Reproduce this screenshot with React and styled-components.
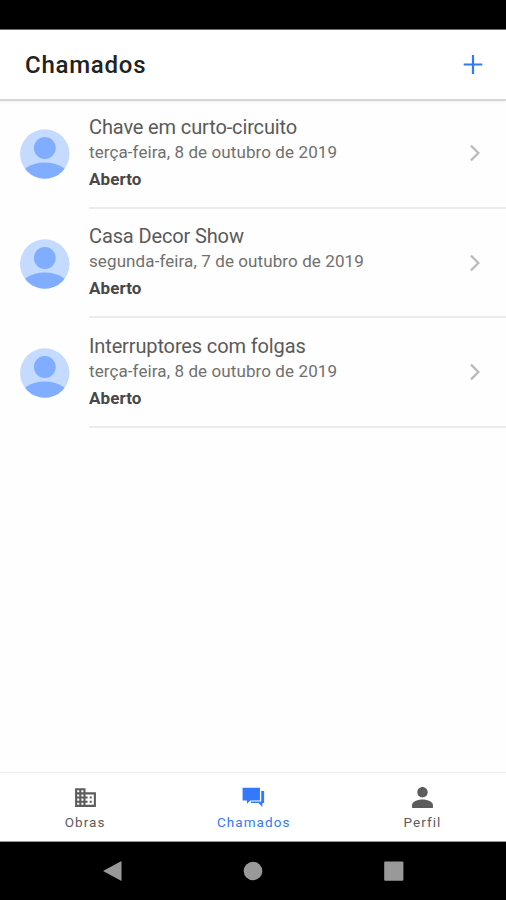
import React from "react";
import styled, { createGlobalStyle } from "styled-components";

const Global = createGlobalStyle`
  * { box-sizing: border-box; }
  body { margin: 0; background: #fff; font-family: Roboto, sans-serif; }
  svg { display: block; flex: none; }
`;

const Screen = styled.div`
  width: 506px;
  height: 900px;
  display: flex;
  flex-direction: column;
  background: #fefefe;
  overflow: hidden;
`;
const StatusBar = styled.div`
  flex: none;
  height: 30px;
  background: #000;
  border-bottom: 1px solid #6c6c6c;
`;
const Header = styled.header`
  flex: none;
  height: 71px;
  display: flex;
  align-items: center;
  justify-content: space-between;
  padding: 0 23px 0 25px;
  background: #fff;
  border-bottom: 2px solid #d6d6d6;
  box-shadow: 0 2px 2px #f5f5f5;
`;
const Title = styled.h1`
  margin: 0;
  font-size: 24px;
  line-height: 30px;
  font-weight: 500;
  letter-spacing: 0.75px;
  color: #222;
`;
const List = styled.main`
  flex: 1;
`;
const Item = styled.article`
  height: 109.55px;
  display: flex;
  padding-left: 20px;
`;
const AvatarBox = styled.div`
  width: 69px;
  flex: none;
  padding-top: 28.4px;
`;
const ItemBody = styled.div`
  flex: 1;
  height: 107.5px;
  display: flex;
  justify-content: space-between;
  border-bottom: 2px solid #ebebeb;
  padding-right: 24px;
`;
const ItemText = styled.div`
  padding-top: 13.5px;
  white-space: nowrap;
`;
const Name = styled.h2`
  margin: 0;
  font-size: 20px;
  line-height: 25px;
  font-weight: 400;
  color: #5a5a5a;
  letter-spacing: -0.13px;
`;
const DateLine = styled.p`
  margin: 0;
  font-size: 17px;
  line-height: 25px;
  color: #707070;
  letter-spacing: 0.1px;
`;
const Status = styled.p`
  margin: 0;
  font-size: 17px;
  line-height: 28px;
  font-weight: 700;
  color: #484848;
  letter-spacing: 0.1px;
`;
const ChevronBox = styled.div`
  padding-top: 42.4px;
`;
const Tabs = styled.nav`
  flex: none;
  height: 70px;
  display: grid;
  grid-template-columns: repeat(3, 1fr);
  background: #fff;
  border-top: 1px solid #f0f0f0;
  border-bottom: 1px solid #999;
`;
const Tab = styled.div`
  display: flex;
  flex-direction: column;
  align-items: center;
  padding: 12px 0 0 1.5px;
  color: ${(p) => (p.$active ? "#3478fb" : "#5c5c5c")};
`;
const TabLabel = styled.span`
  margin-top: 3px;
  font-size: 13.5px;
  line-height: 18px;
  letter-spacing: 1.05px;
`;
const SystemNav = styled.div`
  flex: none;
  height: 58px;
  display: flex;
  justify-content: space-between;
  align-items: center;
  padding: 0 102.5px 0 102px;
  background: #000;
`;

const Avatar = () => (
  <svg width="50" height="50" viewBox="0 0 50 50">
    <defs>
      <clipPath id="disc"><circle cx="24.8" cy="25" r="24.7" /></clipPath>
    </defs>
    <g clipPath="url(#disc)">
      <rect width="50" height="50" fill="#c5daff" />
      <circle cx="24.8" cy="19" r="10.9" fill="#80adff" />
      <ellipse cx="24.8" cy="50" rx="25" ry="16.5" fill="#80adff" />
    </g>
  </svg>
);
const Chevron = () => (
  <svg width="14" height="20" viewBox="0 0 14 20">
    <path d="M3 2.600 L10.400 10 L3 17.400" fill="none" stroke="#b9b9b9" strokeWidth="2.2" />
  </svg>
);
const icons = {
  obras: "M12 7V3H2v18h20V7H12zM6 19H4v-2h2v2zm0-4H4v-2h2v2zm0-4H4V9h2v2zm0-4H4V5h2v2zm4 12H8v-2h2v2zm0-4H8v-2h2v2zm0-4H8V9h2v2zm0-4H8V5h2v2zm10 12h-8v-2h2v-2h-2v-2h2v-2h-2V9h8v10zm-2-8h-2v2h2v-2zm0 4h-2v2h2v-2z",
  chamados: "M1.500 2.600H18.200V14.800H9L5.700 18V14.800H1.500zM19.400 5.800H22.200V17.200H20.500V21L16.800 17.200H9.500V15.900H19.400z",
  perfil: "M12 12c2.750 0 5-2.250 5-5s-2.250-5-5-5-5 2.250-5 5 2.250 5 5 5zm0 2c-3.300 0-10 1.700-10 5v3h20v-3c0-3.300-6.700-5-10-5z",
};
const TabIcon = ({ name }) => (
  <svg width="25" height="25" viewBox="0 0 24 24" fill="currentColor">
    <path d={icons[name]} />
  </svg>
);

const tickets = [
  ["Chave em curto-circuito", "terça-feira, 8 de outubro de 2019"],
  ["Casa Decor Show", "segunda-feira, 7 de outubro de 2019"],
  ["Interruptores com folgas", "terça-feira, 8 de outubro de 2019"],
];
const tabs = [
  ["obras", "Obras"],
  ["chamados", "Chamados"],
  ["perfil", "Perfil"],
];

export default function App() {
  return (
    <Screen>
      <Global />
      <StatusBar />
      <Header>
        <Title>Chamados</Title>
        <svg width="20" height="20" viewBox="0 0 20 20">
          <path d="M10 0V19M.7 9.500H19.300" stroke="#2f7bf6" strokeWidth="2.2" />
        </svg>
      </Header>
      <List>
        {tickets.map(([name, date]) => (
          <Item key={name}>
            <AvatarBox><Avatar /></AvatarBox>
            <ItemBody>
              <ItemText>
                <Name>{name}</Name>
                <DateLine>{date}</DateLine>
                <Status>Aberto</Status>
              </ItemText>
              <ChevronBox><Chevron /></ChevronBox>
            </ItemBody>
          </Item>
        ))}
      </List>
      <Tabs>
        {tabs.map(([icon, label]) => (
          <Tab key={icon} $active={icon === "chamados"}>
            <TabIcon name={icon} />
            <TabLabel>{label}</TabLabel>
          </Tab>
        ))}
      </Tabs>
      <SystemNav>
        <svg width="20" height="22" viewBox="0 0 20 22" fill="#999"><path d="M1 11 L19.500 1V21z" /></svg>
        <svg width="20" height="20" viewBox="0 0 20 20" fill="#999"><circle cx="10" cy="10" r="9.300" /></svg>
        <svg width="20" height="20" viewBox="0 0 20 20" fill="#999"><rect x=".2" y=".5" width="19.200" height="19.200" rx="1" /></svg>
      </SystemNav>
    </Screen>
  );
}
